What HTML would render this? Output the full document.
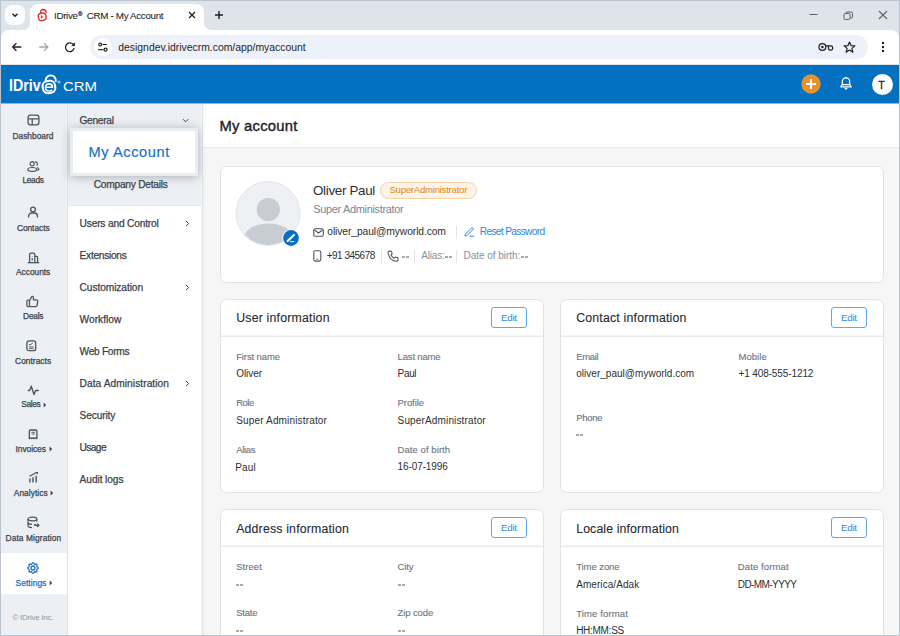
<!DOCTYPE html>
<html><head><meta charset="utf-8"><title>My Account</title>
<style>
html,body{margin:0;padding:0;width:900px;height:636px;overflow:hidden;background:#fff;}
body{position:relative;font-family:"Liberation Sans",sans-serif;}
.r{position:absolute;display:block;}
.t{position:absolute;white-space:pre;line-height:1;}
</style></head><body>
<div class="r" style="left:0px;top:0px;width:900px;height:636px;background:#dfe4ea;"></div>
<div class="r" style="left:1px;top:30px;width:898px;height:34px;background:#fff;border-radius:8px 8px 0 0;"></div>
<div class="r" style="left:5px;top:5px;width:20px;height:20px;background:#fbfcfd;border-radius:7px;"></div>
<svg class="r" style="left:10px;top:10px;" width="10" height="10" viewBox="0 0 10 10"><path d="M2.5 3.8 L5 6.2 L7.5 3.8" fill="none" stroke="#1f1f1f" stroke-width="1.4"/></svg>
<div class="r" style="left:30px;top:4px;width:174px;height:27px;background:#fff;border-radius:8px 8px 0 0;"></div>
<svg class="r" style="left:22px;top:22px;" width="8" height="8" viewBox="0 0 8 8"><path d="M0 8 Q8 8 8 0 L8 8 Z" fill="#fff"/></svg>
<svg class="r" style="left:204px;top:22px;" width="8" height="8" viewBox="0 0 8 8"><path d="M8 8 Q0 8 0 0 L0 8 Z" fill="#fff"/></svg>
<svg class="r" style="left:36px;top:8px;" width="12" height="14" viewBox="0 0 12 14"><path d="M4.4 5.4 Q4.4 1.6 7.2 1.5 Q10.2 1.5 10.2 5.2" fill="none" stroke="#e52d2d" stroke-width="1.3"/><rect x="2.4" y="5.2" width="7.6" height="7.2" rx="2.6" transform="rotate(-12 6.2 8.8)" fill="#fff" stroke="#e52d2d" stroke-width="1.4"/><path d="M5.4 7.3 V10.4 M5.4 8.6 Q7.4 8.2 6.9 9.9" fill="none" stroke="#e52d2d" stroke-width="0.9"/></svg>
<div class="t" style="left:54.00px;top:10.70px;font-size:9.8px;color:#1f1f1f;letter-spacing:-0.33px;-webkit-text-stroke:0.08px #1f1f1f;">IDrive<span style="font-size:6px;position:relative;top:-2.6px;margin-left:0.3px;-webkit-text-stroke:0.2px #1f1f1f">®</span>&nbsp; CRM - My Account</div>
<svg class="r" style="left:188px;top:11px;" width="8" height="8" viewBox="0 0 8 8"><path d="M1 1 L7 7 M7 1 L1 7" stroke="#1f1f1f" stroke-width="1.3"/></svg>
<svg class="r" style="left:214px;top:10px;" width="10" height="10" viewBox="0 0 10 10"><path d="M5 1 V9 M1 5 H9" stroke="#1f1f1f" stroke-width="1.4"/></svg>
<svg class="r" style="left:809px;top:13px;" width="10" height="4" viewBox="0 0 10 4"><path d="M0.5 1.5 H8.5" stroke="#5f6368" stroke-width="1"/></svg>
<svg class="r" style="left:843px;top:11px;" width="11" height="9" viewBox="0 0 11 9"><rect x="1" y="2.5" width="6" height="6" rx="1.2" fill="none" stroke="#5f6368" stroke-width="1"/><path d="M3 2.5 V2 A1 1 0 0 1 4 1 H8 A1.5 1.5 0 0 1 9.5 2.5 V6 A1 1 0 0 1 8.5 7 H7" fill="none" stroke="#5f6368" stroke-width="1"/></svg>
<svg class="r" style="left:878px;top:10px;" width="10" height="10" viewBox="0 0 10 10"><path d="M1 1 L9 9 M9 1 L1 9" stroke="#5f6368" stroke-width="1.1"/></svg>
<svg class="r" style="left:11px;top:42px;" width="12" height="10" viewBox="0 0 12 10"><path d="M10.3 5 H1.8 M5.4 1.3 L1.7 5 L5.4 8.7" fill="none" stroke="#1f1f1f" stroke-width="1.3"/></svg>
<svg class="r" style="left:38px;top:42px;" width="12" height="10" viewBox="0 0 12 10"><path d="M1.2 5 H9.7 M6.1 1.3 L9.8 5 L6.1 8.7" fill="none" stroke="#a3a7ab" stroke-width="1.3"/></svg>
<svg class="r" style="left:64px;top:41px;" width="13" height="12" viewBox="0 0 13 12"><path d="M10.2 7.2 A4.4 4.4 0 1 1 9.2 3.3" fill="none" stroke="#1f1f1f" stroke-width="1.3"/><path d="M10.9 1.2 L10.9 4.9 L7.3 4.9 Z" fill="#1f1f1f"/></svg>
<div class="r" style="left:90px;top:35px;width:778px;height:24px;background:#edf1f9;border-radius:12px;"></div>
<div class="r" style="left:94px;top:38px;width:18px;height:18px;background:#fff;border-radius:9px;"></div>
<svg class="r" style="left:97px;top:41px;" width="12" height="12" viewBox="0 0 12 12"><circle cx="3.2" cy="3.5" r="1.4" fill="none" stroke="#1f1f1f" stroke-width="1.1"/><path d="M5.4 3.5 H9.8" stroke="#1f1f1f" stroke-width="1.1"/><circle cx="8.6" cy="8.7" r="1.5" fill="none" stroke="#1f1f1f" stroke-width="1.2"/><path d="M1 8.7 H6.6" stroke="#1f1f1f" stroke-width="1.1"/></svg>
<div class="t" style="left:118.30px;top:42.50px;font-size:10.4px;color:#1f1f1f;letter-spacing:-0.005px;">designdev.idrivecrm.com/app/myaccount</div>
<svg class="r" style="left:818px;top:42px;" width="16" height="10" viewBox="0 0 16 10"><circle cx="4.4" cy="5" r="3.4" fill="none" stroke="#1f1f1f" stroke-width="1.25"/><circle cx="4.4" cy="5" r="1.2" fill="#1f1f1f"/><path d="M7.8 3.9 H13 A1.6 1.6 0 0 1 14.6 5.5 V6.6 A1.5 1.5 0 0 1 13.1 8.1 H12 A1.5 1.5 0 0 1 10.5 6.6 V4.2" fill="none" stroke="#1f1f1f" stroke-width="1.25"/></svg>
<svg class="r" style="left:843px;top:41px;" width="13" height="12" viewBox="0 0 13 12"><path d="M6.5 1 L8 4.6 L11.9 4.9 L8.9 7.4 L9.9 11.2 L6.5 9.1 L3.1 11.2 L4.1 7.4 L1.1 4.9 L5 4.6 Z" fill="none" stroke="#1f1f1f" stroke-width="1.2" stroke-linejoin="round"/></svg>
<svg class="r" style="left:881px;top:41px;" width="4" height="12" viewBox="0 0 4 12"><circle cx="2" cy="2" r="1.2" fill="#1f1f1f"/><circle cx="2" cy="6" r="1.2" fill="#1f1f1f"/><circle cx="2" cy="10" r="1.2" fill="#1f1f1f"/></svg>
<div class="r" style="left:1px;top:65px;width:898px;height:38px;background:#0470c0;"></div>
<div class="r" style="left:1px;top:103px;width:898px;height:1px;background:#86b9e2;"></div>
<div class="t" style="left:9.30px;top:77.78px;font-size:16.8px;color:#fff;font-weight:700;transform:scaleX(0.85);transform-origin:0 0;">IDriv</div>
<svg class="r" style="left:41px;top:74px;" width="17" height="21" viewBox="0 0 17 21"><path d="M4.6 7.6 Q4.6 1.6 9.6 1.3 Q14.9 1.3 14.9 7.8" fill="none" stroke="#fff" stroke-width="1.8"/><rect x="1.7" y="6.9" width="12.5" height="12.2" rx="5" transform="rotate(-10 7.9 13.0)" fill="#0470c0" stroke="#fff" stroke-width="2.1"/><path d="M4.6 13.3 H11.4 Q11.4 9.9 8 9.9 Q4.5 9.9 4.5 13.4 Q4.5 17 8.1 17 Q10.1 17 11.2 15.9" fill="none" stroke="#fff" stroke-width="1.6"/></svg>
<svg class="r" style="left:57px;top:80px;" width="4" height="4" viewBox="0 0 4 4"><circle cx="2" cy="2" r="1.6" fill="#8fc0ea"/></svg>
<div class="t" style="left:62.60px;top:79.91px;font-size:13.1px;color:#fff;transform:scaleX(1.14);transform-origin:0 0;">CRM</div>
<svg class="r" style="left:801px;top:74px;" width="20" height="20" viewBox="0 0 20 20"><circle cx="10" cy="10" r="9.7" fill="#e9922d"/><path d="M10 5 V15 M5 10 H15" stroke="#fff" stroke-width="2"/></svg>
<svg class="r" style="left:839px;top:76px;" width="14" height="15" viewBox="0 0 14 15"><path d="M3.3 8.6 V5.6 A3.7 3.7 0 0 1 10.7 5.6 V8.6" fill="none" stroke="#fff" stroke-width="1.25"/><path d="M3.3 8.7 L1.8 10.9 H12.2 L10.7 8.7 Z" fill="none" stroke="#fff" stroke-width="1.2" stroke-linejoin="round"/><path d="M5.7 11.8 L7 13.2 L8.3 11.8" fill="none" stroke="#fff" stroke-width="1.1"/><circle cx="7" cy="1.7" r="0.7" fill="#fff"/></svg>
<svg class="r" style="left:872px;top:74px;" width="21" height="21" viewBox="0 0 21 21"><circle cx="10.5" cy="10.5" r="10.5" fill="#fff"/></svg>
<div class="t" style="left:878.30px;top:80.11px;font-size:10.5px;color:#1f2226;letter-spacing:1.586px;-webkit-text-stroke:0.3px #1f2226;">T</div>
<div class="r" style="left:1px;top:104px;width:66px;height:531px;background:#ecf0f4;"></div>
<div class="r" style="left:66px;top:104px;width:1px;height:531px;background:#f3f6f9;"></div>
<div class="r" style="left:67px;top:104px;width:1px;height:531px;background:#d9e1e8;"></div>
<div class="r" style="left:1px;top:553px;width:66px;height:41px;background:#fff;"></div>
<svg class="r" style="left:27px;top:114px;" width="13" height="12" viewBox="0 0 13 12"><rect x="1.1" y="1.1" width="10.8" height="9.8" rx="2.3" fill="none" stroke="#4a545d" stroke-width="1.3"/><path d="M1.1 4.9 H11.9 M5.2 4.9 V10.9" stroke="#4a545d" stroke-width="1.3"/></svg>
<svg class="r" style="left:27px;top:161px;" width="13" height="11" viewBox="0 0 13 11"><circle cx="5.2" cy="2.8" r="2.1" fill="none" stroke="#4a545d" stroke-width="1.2"/><path d="M8 1 A2 2 0 0 1 9.6 4.6" fill="none" stroke="#4a545d" stroke-width="1.2"/><ellipse cx="5.2" cy="8.4" rx="4.4" ry="1.9" fill="none" stroke="#4a545d" stroke-width="1.2"/><path d="M10.3 6.4 L11.8 8.2 L10.6 9.6" fill="none" stroke="#4a545d" stroke-width="1.2"/></svg>
<svg class="r" style="left:27px;top:206px;" width="12" height="13" viewBox="0 0 12 13"><circle cx="6" cy="3.5" r="2.4" fill="none" stroke="#4a545d" stroke-width="1.3"/><path d="M1.6 11.6 V10 A3 3 0 0 1 4.6 7 H7.4 A3 3 0 0 1 10.4 10 V11.6" fill="none" stroke="#4a545d" stroke-width="1.3"/></svg>
<svg class="r" style="left:27px;top:252px;" width="13" height="12" viewBox="0 0 13 12"><path d="M2.6 10.6 V2.6 A1.5 1.5 0 0 1 4.1 1.1 H6.3 A1.5 1.5 0 0 1 7.8 2.6 V10.6 M7.8 4.3 H9.6 A1 1 0 0 1 10.6 5.3 V10.6" fill="none" stroke="#4a545d" stroke-width="1.25"/><path d="M0.8 10.7 H12.2" stroke="#4a545d" stroke-width="1.3"/><path d="M5.2 4 V4.6 M5.2 6 V8.6" stroke="#4a545d" stroke-width="1.2"/></svg>
<svg class="r" style="left:26px;top:295px;" width="13" height="13" viewBox="0 0 13 13"><rect x="0.9" y="5" width="2.6" height="6.6" rx="1" fill="none" stroke="#4a545d" stroke-width="1.25"/><path d="M3.5 5.6 L5.7 1.6 A1 1 0 0 1 7.4 2.3 V4.8 H10.4 A1.3 1.3 0 0 1 11.7 6.3 L11.1 10.4 A1.4 1.4 0 0 1 9.7 11.6 H3.5" fill="none" stroke="#4a545d" stroke-width="1.25" stroke-linejoin="round"/></svg>
<svg class="r" style="left:26px;top:340px;" width="11" height="12" viewBox="0 0 11 12"><rect x="0.9" y="0.9" width="8.8" height="9.8" rx="2" fill="none" stroke="#4a545d" stroke-width="1.3"/><path d="M2.9 4.1 L4.1 5 L6.8 3" fill="none" stroke="#4a545d" stroke-width="1"/><path d="M3 6.9 H7.6 M3 8.4 H7.6" stroke="#4a545d" stroke-width="0.9"/></svg>
<svg class="r" style="left:27px;top:385px;" width="13" height="11" viewBox="0 0 13 11"><path d="M0.8 5.5 H2.6 L4.3 1.2 L7 9.6 L8.6 5.5 H11.8" fill="none" stroke="#4a545d" stroke-width="1.35" stroke-linejoin="round"/></svg>
<svg class="r" style="left:28px;top:429px;" width="11" height="11" viewBox="0 0 11 11"><path d="M1.3 9.6 V2.3 A1.3 1.3 0 0 1 2.6 1 H7.6 A1.3 1.3 0 0 1 8.9 2.3 V9.6 L7.6 8.8 L6.4 9.6 L5.1 8.8 L3.8 9.6 L2.6 8.8 Z" fill="none" stroke="#4a545d" stroke-width="1.3" stroke-linejoin="round"/><path d="M3.3 3.3 H6.9 M3.6 5 H6.9" stroke="#4a545d" stroke-width="0.9"/></svg>
<svg class="r" style="left:28px;top:471px;" width="12" height="13" viewBox="0 0 12 13"><path d="M1.9 7.4 V11.4 M5 6.2 V11.4 M8.2 4.7 V11.4" stroke="#4a545d" stroke-width="1.4"/><path d="M1.4 5.2 Q5 3.6 8.3 1.6" fill="none" stroke="#4a545d" stroke-width="1.2"/><path d="M7 0.9 H10 V3.6 Z" fill="#4a545d"/></svg>
<svg class="r" style="left:27px;top:516px;" width="13" height="13" viewBox="0 0 13 13"><ellipse cx="5.4" cy="3" rx="4.4" ry="1.8" fill="none" stroke="#4a545d" stroke-width="1.2"/><path d="M1 3 V9.8 Q1 11.4 5 11.6 M1 6.5 Q1 8.2 5 8.3 M9.8 3 V5.8" fill="none" stroke="#4a545d" stroke-width="1.2"/><path d="M7.2 9.3 H11.8 M10.2 7.6 L11.9 9.3 L10.2 11 M7.2 9.3 L8.5 8" fill="none" stroke="#4a545d" stroke-width="1.2"/></svg>
<svg class="r" style="left:27px;top:562px;" width="12" height="12" viewBox="0 0 12 12"><polygon points="5.48,0.73 6.52,0.73 7.19,2.08 7.93,2.38 9.36,1.90 10.10,2.64 9.62,4.07 9.92,4.81 11.27,5.48 11.27,6.52 9.92,7.19 9.62,7.93 10.10,9.36 9.36,10.10 7.93,9.62 7.19,9.92 6.52,11.27 5.48,11.27 4.81,9.92 4.07,9.62 2.64,10.10 1.90,9.36 2.38,7.93 2.08,7.19 0.73,6.52 0.73,5.48 2.08,4.81 2.38,4.07 1.90,2.64 2.64,1.90 4.07,2.38 4.81,2.08" fill="none" stroke="#1a72c4" stroke-width="1.2" stroke-linejoin="round"/><circle cx="6" cy="6" r="2" fill="none" stroke="#1a72c4" stroke-width="1.3"/></svg>
<div class="t" style="left:12.50px;top:131.69px;font-size:8.4px;color:#3b4249;letter-spacing:-0.012px;-webkit-text-stroke:0.25px #3b4249;">Dashboard</div>
<div class="t" style="left:22.40px;top:176.19px;font-size:8.4px;color:#3b4249;letter-spacing:-0.297px;-webkit-text-stroke:0.25px #3b4249;">Leads</div>
<div class="t" style="left:16.90px;top:224.29px;font-size:8.4px;color:#3b4249;letter-spacing:-0.050px;-webkit-text-stroke:0.25px #3b4249;">Contacts</div>
<div class="t" style="left:16.00px;top:268.29px;font-size:8.4px;color:#3b4249;letter-spacing:-0.022px;-webkit-text-stroke:0.25px #3b4249;">Accounts</div>
<div class="t" style="left:23.10px;top:312.49px;font-size:8.4px;color:#3b4249;letter-spacing:-0.244px;-webkit-text-stroke:0.25px #3b4249;">Deals</div>
<div class="t" style="left:15.10px;top:356.79px;font-size:8.4px;color:#3b4249;letter-spacing:0.019px;-webkit-text-stroke:0.25px #3b4249;">Contracts</div>
<div class="t" style="left:21.30px;top:400.49px;font-size:8.4px;color:#3b4249;letter-spacing:-0.403px;-webkit-text-stroke:0.25px #3b4249;">Sales</div>
<svg class="r" style="left:43px;top:402px;" width="4" height="6" viewBox="0 0 4 6"><path d="M0.6 0.6 L3.2 3 L0.6 5.4 Z" fill="#3b4249"/></svg>
<div class="t" style="left:15.50px;top:444.79px;font-size:8.4px;color:#3b4249;letter-spacing:-0.045px;-webkit-text-stroke:0.25px #3b4249;">Invoices</div>
<svg class="r" style="left:49px;top:446px;" width="4" height="6" viewBox="0 0 4 6"><path d="M0.6 0.6 L3.2 3 L0.6 5.4 Z" fill="#3b4249"/></svg>
<div class="t" style="left:13.80px;top:489.29px;font-size:8.4px;color:#3b4249;letter-spacing:0.036px;-webkit-text-stroke:0.25px #3b4249;">Analytics</div>
<svg class="r" style="left:50px;top:490px;" width="4" height="6" viewBox="0 0 4 6"><path d="M0.6 0.6 L3.2 3 L0.6 5.4 Z" fill="#3b4249"/></svg>
<div class="t" style="left:5.50px;top:534.19px;font-size:8.4px;color:#3b4249;letter-spacing:0.098px;-webkit-text-stroke:0.25px #3b4249;">Data Migration</div>
<div class="t" style="left:15.60px;top:579.19px;font-size:8.4px;color:#1a72c4;letter-spacing:0.064px;-webkit-text-stroke:0.25px #1a72c4;">Settings</div>
<svg class="r" style="left:49px;top:580px;" width="4" height="6" viewBox="0 0 4 6"><path d="M0.6 0.6 L3.2 3 L0.6 5.4 Z" fill="#3b4249"/></svg>
<div class="t" style="left:12.50px;top:614.03px;font-size:8px;color:#8f969d;letter-spacing:-0.269px;">© IDrive Inc.</div>
<div class="r" style="left:68px;top:104px;width:134px;height:531px;background:#fff;"></div>
<div class="r" style="left:68px;top:104px;width:134px;height:102px;background:#ecf0f4;"></div>
<div class="r" style="left:68px;top:205px;width:134px;height:1px;background:#e6ebf1;"></div>
<div class="r" style="left:201px;top:104px;width:1px;height:531px;background:#f2f5f8;"></div>
<div class="r" style="left:202px;top:104px;width:1px;height:531px;background:#dfe4e9;"></div>
<div class="t" style="left:79.40px;top:115.97px;font-size:10.2px;color:#3b4249;letter-spacing:-0.282px;-webkit-text-stroke:0.25px #3b4249;">General</div>
<svg class="r" style="left:182px;top:118px;" width="8" height="6" viewBox="0 0 8 6"><path d="M1 1.2 L3.6 3.8 L6.2 1.2" fill="none" stroke="#3b4249" stroke-width="1"/></svg>
<div class="t" style="left:93.70px;top:180.27px;font-size:10.2px;color:#3b4249;letter-spacing:-0.241px;-webkit-text-stroke:0.25px #3b4249;">Company Details</div>
<div class="r" style="left:70px;top:128px;width:128px;height:48px;background:#e8edf2;box-shadow:0 1px 9px rgba(40,50,60,0.34);"></div>
<div class="r" style="left:73px;top:131px;width:122px;height:42px;background:#fff;"></div>
<div class="t" style="left:88.50px;top:144.64px;font-size:14.6px;color:#1a72c4;letter-spacing:0.593px;-webkit-text-stroke:0.2px #1a72c4;">My Account</div>
<div class="t" style="left:79.60px;top:218.57px;font-size:10.2px;color:#3b4249;letter-spacing:-0.182px;-webkit-text-stroke:0.25px #3b4249;">Users and Control</div>
<svg class="r" style="left:185px;top:220px;" width="5" height="7" viewBox="0 0 5 7"><path d="M1 1 L3.6 3.6 L1 6.2" fill="none" stroke="#3b4249" stroke-width="1"/></svg>
<div class="t" style="left:79.60px;top:250.57px;font-size:10.2px;color:#3b4249;letter-spacing:-0.289px;-webkit-text-stroke:0.25px #3b4249;">Extensions</div>
<div class="t" style="left:79.60px;top:282.57px;font-size:10.2px;color:#3b4249;letter-spacing:-0.086px;-webkit-text-stroke:0.25px #3b4249;">Customization</div>
<svg class="r" style="left:185px;top:284px;" width="5" height="7" viewBox="0 0 5 7"><path d="M1 1 L3.6 3.6 L1 6.2" fill="none" stroke="#3b4249" stroke-width="1"/></svg>
<div class="t" style="left:79.60px;top:314.57px;font-size:10.2px;color:#3b4249;letter-spacing:0.007px;-webkit-text-stroke:0.25px #3b4249;">Workflow</div>
<div class="t" style="left:79.60px;top:346.57px;font-size:10.2px;color:#3b4249;letter-spacing:-0.315px;-webkit-text-stroke:0.25px #3b4249;">Web Forms</div>
<div class="t" style="left:79.60px;top:378.57px;font-size:10.2px;color:#3b4249;letter-spacing:0.058px;-webkit-text-stroke:0.25px #3b4249;">Data Administration</div>
<svg class="r" style="left:185px;top:380px;" width="5" height="7" viewBox="0 0 5 7"><path d="M1 1 L3.6 3.6 L1 6.2" fill="none" stroke="#3b4249" stroke-width="1"/></svg>
<div class="t" style="left:79.60px;top:410.57px;font-size:10.2px;color:#3b4249;letter-spacing:-0.164px;-webkit-text-stroke:0.25px #3b4249;">Security</div>
<div class="t" style="left:79.60px;top:442.57px;font-size:10.2px;color:#3b4249;letter-spacing:-0.621px;-webkit-text-stroke:0.25px #3b4249;">Usage</div>
<div class="t" style="left:79.60px;top:474.57px;font-size:10.2px;color:#3b4249;letter-spacing:-0.089px;-webkit-text-stroke:0.25px #3b4249;">Audit logs</div>
<div class="r" style="left:203px;top:104px;width:696px;height:43px;background:#fff;"></div>
<div class="r" style="left:203px;top:147px;width:696px;height:1px;background:#e8ebee;"></div>
<div class="r" style="left:203px;top:148px;width:696px;height:487px;background:#f6f6f6;"></div>
<div class="r" style="left:203px;top:104px;width:3px;height:531px;background:linear-gradient(90deg,rgba(0,0,0,0.035),rgba(0,0,0,0));"></div>
<div class="t" style="left:219.50px;top:118.77px;font-size:14.8px;color:#1e2226;letter-spacing:0.236px;-webkit-text-stroke:0.38px #1e2226;">My account</div>
<div class="r" style="left:220px;top:166px;width:664px;height:117px;background:#fff;border:1px solid #e2e2e2;border-radius:7px;box-sizing:border-box;"></div>
<svg class="r" style="left:235px;top:180px;" width="66" height="67" viewBox="0 0 66 67"><defs><clipPath id="av"><circle cx="33" cy="33.5" r="31.5"/></clipPath></defs><circle cx="33" cy="33.5" r="32" fill="#eef0f3" stroke="#e2e5e9" stroke-width="1"/><g clip-path="url(#av)"><circle cx="33.3" cy="29.5" r="11.6" fill="#c8ccd3"/><ellipse cx="33.3" cy="56" rx="23.3" ry="12.5" fill="#c8ccd3"/></g></svg>
<svg class="r" style="left:282px;top:229px;" width="18" height="18" viewBox="0 0 18 18"><circle cx="9" cy="9" r="8.7" fill="#fff"/><circle cx="9" cy="9" r="7.9" fill="#0a6fc2"/><path d="M5.6 12 L11.9 5.9" stroke="#fff" stroke-width="2.1" stroke-linecap="round"/><path d="M8.2 12.6 H12.2" stroke="#fff" stroke-width="1.1"/></svg>
<div class="t" style="left:313.00px;top:183.76px;font-size:13.4px;color:#2b2f33;letter-spacing:-0.324px;">Oliver Paul</div>
<div class="r" style="left:380px;top:182px;width:97px;height:17px;background:#fdf4e8;border:1px solid #f2d1a3;border-radius:9px;box-sizing:border-box;"></div>
<div class="t" style="left:389.40px;top:185.47px;font-size:9.6px;color:#e0861b;letter-spacing:-0.245px;">SuperAdministrator</div>
<div class="t" style="left:313.30px;top:204.19px;font-size:11px;color:#7d8691;letter-spacing:-0.350px;">Super Administrator</div>
<svg class="r" style="left:313px;top:228px;" width="11" height="9" viewBox="0 0 11 9"><rect x="0.7" y="0.7" width="9.6" height="7.6" rx="1.5" fill="none" stroke="#4d555d" stroke-width="1.1"/><path d="M1.5 2 L5.5 5 L9.5 2" fill="none" stroke="#4d555d" stroke-width="1.1"/></svg>
<div class="t" style="left:327.30px;top:227.28px;font-size:10.3px;color:#2b2f33;letter-spacing:-0.102px;">oliver_paul@myworld.com</div>
<div class="r" style="left:456px;top:226px;width:1px;height:13px;background:#e1e4e8;"></div>
<svg class="r" style="left:464px;top:226px;" width="11" height="11" viewBox="0 0 11 11"><path d="M1.2 8.3 L1 10 L2.7 9.8 L9.6 2.9 L8.1 1.4 Z" fill="none" stroke="#2b8ae0" stroke-width="1"/><path d="M5.5 10.2 H10" stroke="#2b8ae0" stroke-width="1"/></svg>
<div class="t" style="left:479.80px;top:226.57px;font-size:10.2px;color:#2b8ae0;letter-spacing:-0.682px;">Reset Password</div>
<svg class="r" style="left:313px;top:250px;" width="9" height="12" viewBox="0 0 9 12"><rect x="0.8" y="0.7" width="7" height="10.4" rx="1.6" fill="none" stroke="#4d555d" stroke-width="1.1"/><path d="M3.3 9.2 H5.3" stroke="#4d555d" stroke-width="0.9"/></svg>
<div class="t" style="left:326.70px;top:251.03px;font-size:10px;color:#2b2f33;letter-spacing:-0.501px;">+91 345678</div>
<div class="r" style="left:381px;top:250px;width:1px;height:13px;background:#e1e4e8;"></div>
<svg class="r" style="left:387px;top:250px;" width="12" height="12" viewBox="0 0 12 12"><path d="M2.2 1 L4.4 1.2 L5.2 3.8 L3.9 4.8 Q5 7.3 7.3 8.3 L8.3 7 L10.9 7.8 L11 10 Q10.6 11.3 9 11.2 Q2.5 10.5 1 3 Q0.9 1.4 2.2 1 Z" fill="none" stroke="#4d555d" stroke-width="1.05" stroke-linejoin="round"/></svg>
<div class="r" style="left:402px;top:256px;width:3px;height:2px;background:#5f666e;opacity:0.55"></div>
<div class="r" style="left:406px;top:256px;width:3px;height:2px;background:#5f666e;opacity:0.55"></div>
<div class="r" style="left:414px;top:250px;width:1px;height:13px;background:#e1e4e8;"></div>
<div class="t" style="left:421.30px;top:251.03px;font-size:10px;color:#8a919a;letter-spacing:-0.191px;">Alias:</div>
<div class="r" style="left:445px;top:256px;width:3px;height:2px;background:#5f666e;opacity:0.55"></div>
<div class="r" style="left:449px;top:256px;width:3px;height:2px;background:#5f666e;opacity:0.55"></div>
<div class="r" style="left:456px;top:250px;width:1px;height:13px;background:#e1e4e8;"></div>
<div class="t" style="left:463.50px;top:251.03px;font-size:10px;color:#8a919a;letter-spacing:-0.034px;">Date of birth:</div>
<div class="r" style="left:521px;top:256px;width:3px;height:2px;background:#5f666e;opacity:0.55"></div>
<div class="r" style="left:525px;top:256px;width:3px;height:2px;background:#5f666e;opacity:0.55"></div>
<div class="r" style="left:220px;top:299px;width:324px;height:194px;background:#fff;border:1px solid #e2e2e2;border-radius:7px;box-sizing:border-box;"></div>
<div class="r" style="left:221px;top:335px;width:322px;height:1px;background:#f3f4f5;"></div>
<div class="r" style="left:221px;top:336px;width:322px;height:1px;background:#e7e9eb;"></div>
<div class="t" style="left:236.20px;top:311.89px;font-size:12.3px;color:#262b31;letter-spacing:0.205px;-webkit-text-stroke:0.1px #262b31;">User information</div>
<div class="r" style="left:491px;top:307px;width:36px;height:21px;border:1px solid #5aabed;border-radius:3px;box-sizing:border-box;background:#fff;"></div>
<div class="t" style="left:501.00px;top:313.10px;font-size:9.8px;color:#2d8ae0;letter-spacing:-0.295px;">Edit</div>
<div class="t" style="left:236.20px;top:351.66px;font-size:9.5px;color:#6e7680;letter-spacing:-0.119px;-webkit-text-stroke:0.12px #6b737c;">First name</div>
<div class="t" style="left:236.20px;top:369.34px;font-size:10px;color:#2b2f33;letter-spacing:-0.043px;">Oliver</div>
<div class="t" style="left:397.60px;top:351.66px;font-size:9.5px;color:#6e7680;letter-spacing:-0.170px;-webkit-text-stroke:0.12px #6b737c;">Last name</div>
<div class="t" style="left:397.60px;top:369.14px;font-size:10px;color:#2b2f33;letter-spacing:-0.338px;">Paul</div>
<div class="t" style="left:236.20px;top:398.46px;font-size:9.5px;color:#6e7680;letter-spacing:-0.513px;-webkit-text-stroke:0.12px #6b737c;">Role</div>
<div class="t" style="left:236.20px;top:415.64px;font-size:10px;color:#2b2f33;letter-spacing:0.160px;">Super Administrator</div>
<div class="t" style="left:397.60px;top:398.46px;font-size:9.5px;color:#6e7680;letter-spacing:-0.088px;-webkit-text-stroke:0.12px #6b737c;">Profile</div>
<div class="t" style="left:397.60px;top:415.64px;font-size:10px;color:#2b2f33;letter-spacing:0.148px;">SuperAdministrator</div>
<div class="t" style="left:236.20px;top:444.76px;font-size:9.5px;color:#6e7680;letter-spacing:-0.323px;-webkit-text-stroke:0.12px #6b737c;">Alias</div>
<div class="t" style="left:397.60px;top:444.76px;font-size:9.5px;color:#6e7680;letter-spacing:0.063px;-webkit-text-stroke:0.12px #6b737c;">Date of birth</div>
<div class="t" style="left:397.60px;top:461.54px;font-size:10px;color:#2b2f33;letter-spacing:-0.105px;">16-07-1996</div>
<div class="t" style="left:235.30px;top:463.14px;font-size:10px;color:#2b2f33;letter-spacing:0.129px;">Paul</div>
<div class="r" style="left:560px;top:299px;width:324px;height:194px;background:#fff;border:1px solid #e2e2e2;border-radius:7px;box-sizing:border-box;"></div>
<div class="r" style="left:561px;top:335px;width:322px;height:1px;background:#f3f4f5;"></div>
<div class="r" style="left:561px;top:336px;width:322px;height:1px;background:#e7e9eb;"></div>
<div class="t" style="left:576.20px;top:311.89px;font-size:12.3px;color:#262b31;letter-spacing:0.197px;-webkit-text-stroke:0.1px #262b31;">Contact information</div>
<div class="r" style="left:831px;top:307px;width:36px;height:21px;border:1px solid #5aabed;border-radius:3px;box-sizing:border-box;background:#fff;"></div>
<div class="t" style="left:841.00px;top:313.10px;font-size:9.8px;color:#2d8ae0;letter-spacing:-0.295px;">Edit</div>
<div class="t" style="left:576.20px;top:351.66px;font-size:9.5px;color:#6e7680;letter-spacing:-0.314px;-webkit-text-stroke:0.12px #6b737c;">Email</div>
<div class="t" style="left:576.20px;top:368.94px;font-size:10px;color:#2b2f33;letter-spacing:0.027px;">oliver_paul@myworld.com</div>
<div class="t" style="left:738.40px;top:351.66px;font-size:9.5px;color:#6e7680;letter-spacing:0.083px;-webkit-text-stroke:0.12px #6b737c;">Mobile</div>
<div class="t" style="left:738.40px;top:368.94px;font-size:10px;color:#2b2f33;letter-spacing:-0.103px;">+1 408-555-1212</div>
<div class="t" style="left:576.20px;top:412.76px;font-size:9.5px;color:#6e7680;letter-spacing:-0.267px;-webkit-text-stroke:0.12px #6b737c;">Phone</div>
<div class="r" style="left:576px;top:434px;width:3px;height:2px;background:#5f666e;opacity:0.55"></div>
<div class="r" style="left:580px;top:434px;width:3px;height:2px;background:#5f666e;opacity:0.55"></div>
<div class="r" style="left:220px;top:509px;width:324px;height:151px;background:#fff;border:1px solid #e2e2e2;border-radius:7px;box-sizing:border-box;"></div>
<div class="r" style="left:221px;top:545px;width:322px;height:1px;background:#f3f4f5;"></div>
<div class="r" style="left:221px;top:546px;width:322px;height:1px;background:#e7e9eb;"></div>
<div class="t" style="left:236.20px;top:522.59px;font-size:12.3px;color:#262b31;letter-spacing:0.184px;-webkit-text-stroke:0.1px #262b31;">Address information</div>
<div class="r" style="left:491px;top:517px;width:36px;height:21px;border:1px solid #5aabed;border-radius:3px;box-sizing:border-box;background:#fff;"></div>
<div class="t" style="left:501.00px;top:523.10px;font-size:9.8px;color:#2d8ae0;letter-spacing:-0.295px;">Edit</div>
<div class="t" style="left:236.20px;top:561.96px;font-size:9.5px;color:#6e7680;letter-spacing:0.051px;-webkit-text-stroke:0.12px #6b737c;">Street</div>
<div class="r" style="left:236px;top:584px;width:3px;height:2px;background:#5f666e;opacity:0.55"></div>
<div class="r" style="left:240px;top:584px;width:3px;height:2px;background:#5f666e;opacity:0.55"></div>
<div class="t" style="left:397.60px;top:561.96px;font-size:9.5px;color:#6e7680;letter-spacing:-0.120px;-webkit-text-stroke:0.12px #6b737c;">City</div>
<div class="r" style="left:398px;top:584px;width:3px;height:2px;background:#5f666e;opacity:0.55"></div>
<div class="r" style="left:402px;top:584px;width:3px;height:2px;background:#5f666e;opacity:0.55"></div>
<div class="t" style="left:236.20px;top:608.26px;font-size:9.5px;color:#6e7680;letter-spacing:-0.220px;-webkit-text-stroke:0.12px #6b737c;">State</div>
<div class="r" style="left:236px;top:630px;width:3px;height:2px;background:#5f666e;opacity:0.55"></div>
<div class="r" style="left:240px;top:630px;width:3px;height:2px;background:#5f666e;opacity:0.55"></div>
<div class="t" style="left:397.60px;top:608.26px;font-size:9.5px;color:#6e7680;letter-spacing:-0.119px;-webkit-text-stroke:0.12px #6b737c;">Zip code</div>
<div class="r" style="left:398px;top:630px;width:3px;height:2px;background:#5f666e;opacity:0.55"></div>
<div class="r" style="left:402px;top:630px;width:3px;height:2px;background:#5f666e;opacity:0.55"></div>
<div class="r" style="left:560px;top:509px;width:324px;height:151px;background:#fff;border:1px solid #e2e2e2;border-radius:7px;box-sizing:border-box;"></div>
<div class="r" style="left:561px;top:545px;width:322px;height:1px;background:#f3f4f5;"></div>
<div class="r" style="left:561px;top:546px;width:322px;height:1px;background:#e7e9eb;"></div>
<div class="t" style="left:576.20px;top:522.59px;font-size:12.3px;color:#262b31;letter-spacing:0.129px;-webkit-text-stroke:0.1px #262b31;">Locale information</div>
<div class="r" style="left:831px;top:517px;width:36px;height:21px;border:1px solid #5aabed;border-radius:3px;box-sizing:border-box;background:#fff;"></div>
<div class="t" style="left:841.00px;top:523.10px;font-size:9.8px;color:#2d8ae0;letter-spacing:-0.295px;">Edit</div>
<div class="t" style="left:576.20px;top:561.96px;font-size:9.5px;color:#6e7680;letter-spacing:-0.074px;-webkit-text-stroke:0.12px #6b737c;">Time zone</div>
<div class="t" style="left:576.20px;top:580.13px;font-size:10px;color:#2b2f33;letter-spacing:0.069px;">America/Adak</div>
<div class="t" style="left:737.80px;top:561.96px;font-size:9.5px;color:#6e7680;letter-spacing:0.117px;-webkit-text-stroke:0.12px #6b737c;">Date format</div>
<div class="t" style="left:737.80px;top:580.13px;font-size:10px;color:#2b2f33;letter-spacing:-0.583px;">DD-MM-YYYY</div>
<div class="t" style="left:576.20px;top:608.96px;font-size:9.5px;color:#6e7680;letter-spacing:0.128px;-webkit-text-stroke:0.12px #6b737c;">Time format</div>
<div class="t" style="left:576.20px;top:625.53px;font-size:10px;color:#2b2f33;letter-spacing:-0.286px;">HH:MM:SS</div>
<div class="r" style="left:0px;top:0px;width:900px;height:1px;background:#b9c4ce;"></div>
<div class="r" style="left:0px;top:635px;width:900px;height:1px;background:#b9c4ce;"></div>
<div class="r" style="left:0px;top:0px;width:1px;height:636px;background:#b9c4ce;"></div>
<div class="r" style="left:899px;top:0px;width:1px;height:636px;background:#b9c4ce;"></div>
</body></html>
